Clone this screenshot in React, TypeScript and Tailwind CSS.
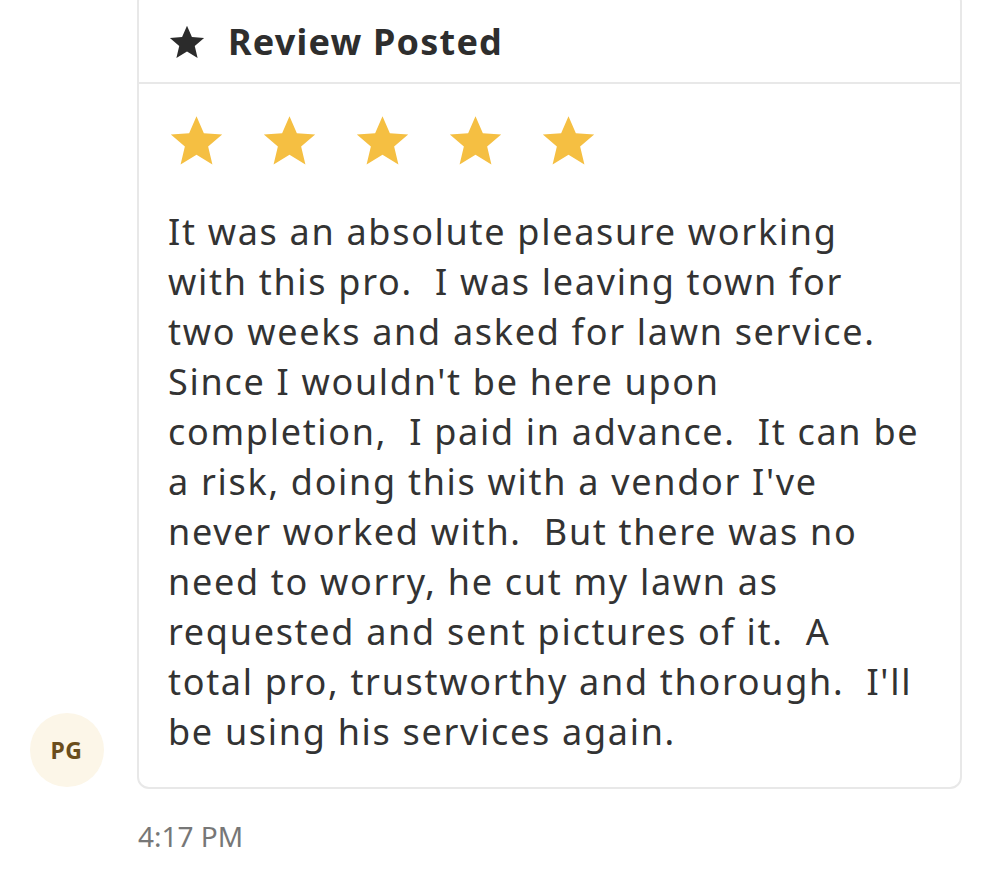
import React from 'react';

const lines = [
  'It was an absolute pleasure working',
  'with this pro.  I was leaving town for',
  'two weeks and asked for lawn service.',
  "Since I wouldn't be here upon",
  'completion,  I paid in advance.  It can be',
  "a risk, doing this with a vendor I've",
  'never worked with.  But there was no',
  'need to worry, he cut my lawn as',
  'requested and sent pictures of it.  A',
  "total pro, trustworthy and thorough.  I'll",
  'be using his services again.',
];

const Star: React.FC<{ className?: string }> = ({ className }) => (
  <svg viewBox="0 0 24 24" className={className} fill="currentColor">
    <path d="M12 1.8l3.1 7.1 7.7.6-5.9 5 1.8 7.6L12 18l-6.7 4.1 1.8-7.6-5.9-5 7.7-.6z" strokeLinejoin="round" />
  </svg>
);

const App: React.FC = () => {
  return (
    <div
      className="w-[1000px] h-[896px] bg-white overflow-hidden text-[#2e2e2e]"
      style={{ fontFamily: '"Noto Sans", "Open Sans", sans-serif' }}
    >
      <div className="flex items-end pr-[38px]">
        <div className="w-[137px] flex justify-center pb-[2px] pr-[4px]">
          <div className="w-[74px] h-[74px] rounded-full bg-[#fcf6e8] flex items-center justify-center text-[#6a4d1c] text-[23px] font-bold tracking-[0.5px]">
            PG
          </div>
        </div>

        <div className="flex-1 -mt-[10px] rounded-[12px] border-2 border-[#e8e8e8] bg-white">
          <div className="h-[92px] pt-[10px] flex items-center gap-[22px] pl-[29px] border-b-2 border-[#e8e8e8]">
            <Star className="w-[38px] h-[38px] text-[#2b2b2b]" />
            <span className="text-[36px] font-bold tracking-[1.2px]">Review Posted</span>
          </div>

          <div className="pl-[29px] pt-[28px] pb-[30px]">
            <div className="flex gap-[36px] text-[#f5bf42]">
              {[0, 1, 2, 3, 4].map((i) => (
                <Star key={i} className="w-[57px] h-[57px]" />
              ))}
            </div>
            <div className="mt-[38px] text-[36px] leading-[50px] tracking-[1.7px] text-[#333]">
              {lines.map((l, i) => (
                <div key={i} className="whitespace-pre">
                  {l}
                </div>
              ))}
            </div>
          </div>
        </div>
      </div>

      <div className="pl-[138px] pt-[26px] text-[28px] text-[#777]">4:17 PM</div>
    </div>
  );
};

export default App;
